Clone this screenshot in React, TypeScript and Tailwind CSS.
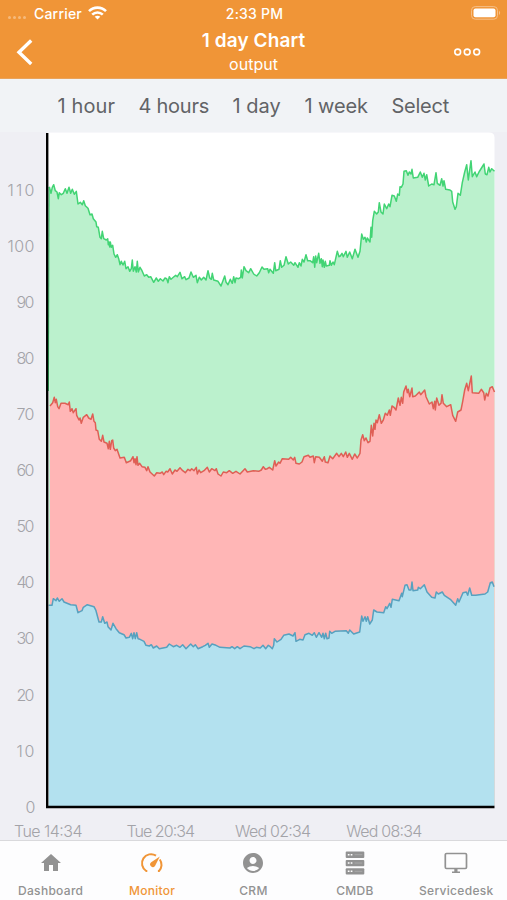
import React from 'react';
import { MdAccountCircle, MdHome } from 'react-icons/md';

const ranges = [
  { label: '1 hour', width: 'w-[57px] tracking-[0.1px]' },
  { label: '4 hours', width: 'w-[70px] tracking-[-0.25px]' },
  { label: '1 day', width: 'w-[48px] tracking-[0px]' },
  { label: '1 week', width: 'w-[63px] tracking-[-0.1px]' },
  { label: 'Select', width: 'w-[58px] tracking-[-0.25px]' },
];

const yTicks = [0, 10, 20, 30, 40, 50, 60, 70, 80, 90, 100, 110];
const xTicks = [
  { label: 'Tue 14:34', x: 14, width: 68.5 },
  { label: 'Tue 20:34', x: 126.5, width: 68.5 },
  { label: 'Wed 02:34', x: 235, width: 76 },
  { label: 'Wed 08:34', x: 346.3, width: 76 },
];

const green =
  '49.3,186.7 51,193.3 52.3,187.3 53.7,184.7 55.3,190.7 57,192 58.3,198.7 59.3,192.7 61.3,194.7 63.3,193.3 65.3,188.7 67,193.3 69,187.3 70.7,193.3 72.3,189.3 74.3,194.3 76.3,191.3 78,204 80.3,202.3 82.3,204.7 83.7,200.7 85.3,205.7 88,208.3 90,214.7 92,214 93.3,218.7 96,222 96.7,226.7 98.3,227.3 100,237.3 101.3,238.7 102.3,231.3 103.7,238.7 106.3,240 107.7,238.7 108.3,244.7 109,242 109.7,247 110.3,242 111.3,247.3 112.7,245.3 114,254 115.7,257.3 117.3,254.7 118.7,258.7 120,264.7 121.3,261.3 123,265 124.7,261.3 126,268.7 128,266.7 129.7,271.3 131.3,268.7 132.3,260 133.3,271.3 135,266.7 136.3,272 137.3,261.3 138.3,272 140,267.3 142,270.7 144.3,276 146.7,274.7 148.7,277.3 150.7,276.7 153.7,282.3 156.3,278 158.3,281.3 160.3,278.7 163,281 165,278 166.7,278.7 168,282.7 169.3,276.7 171,279.3 173.3,277.3 175.7,275.3 177.3,276.7 180,272.3 182,278.7 184.7,276.7 186,279.7 189,278 191,272 ' +
  '193.3,277.3 196,275.3 197.3,282.7 199.3,277.3 201.3,280 203.7,277.3 206,280 208,270.7 209.7,278 211.3,279.3 212.3,273.3 213.7,280 218,281.3 221,286 224.7,276 226,282 228,284.7 230.3,279.3 232.3,283.3 233.7,276.7 235,282.7 236,278 238.7,278.7 240.7,277.3 241.3,270 242.3,278 244,266.7 246,270.7 248.7,272.7 250.7,268.7 253.7,274 256.7,276 259.3,272.7 262,267 264,269.3 267.7,268.7 268.7,272.7 270,269.3 273.3,273.3 274.7,262.7 275.7,270.7 279,269.3 280.3,260.7 281.7,267.3 284,265.3 286,256.7 288.3,264 290.7,262 293.7,265.3 295,262.7 298,267.3 299.3,262.7 301,266 302.3,259.3 304,262 306,254.7 307.7,260.7 310,260.7 312.7,262.7 313.7,256.7 314.7,267.3 315.7,256 316.7,262.7 318.7,253.3 320,263.3 321.3,258.7 322.3,266.7 323,260 324.3,267.3 325.3,261.3 326.3,266 329.3,265.3 330,260.7 331.3,265.3 333,262 334.3,264.7 337.3,251.3 339,256.7 ' +
  '340.3,256 342,253.3 343.3,256.7 346,251.3 347.3,257.3 349.7,252 352.3,258.7 355,249.3 358,257.3 360,251.3 361.7,234 363.3,239.3 365,237.3 366.3,242 367.3,238 370,242 371,227.3 371.7,237.3 372.7,220.7 374.3,211.3 376.7,214 378.3,212 379.3,202.7 381,212 383,214 384.3,204 386.7,208.7 388.7,204 390,206.7 392,195.3 394.3,196 396.3,201.3 397.7,194 399.3,195.3 400,186.7 401.3,187.3 403,184 404,171.3 406.3,170.7 408,175.3 409.3,172 411,174 412,169.3 413.3,178 417.7,177.3 420.3,172 422.3,177.3 424,173.3 425.3,180 426.7,174.7 428.7,186 431.7,184 434,184.7 436,172.7 437.3,183.3 440,185.3 441.7,178.7 443,186 444,180.7 445.7,189.3 450,190 451.7,191.3 452.7,202 455,209.3 456.3,206.7 458,193.3 460.3,195.3 462.3,182.7 464.7,172 466.7,164.7 468.3,180 471,160.7 472.3,176.7 475,172 476.7,176.7 479,172 484,164 485.3,174 487,174.7 488.7,167.3 490,172 491.7,168.7 494.5,171.3';

const red =
  '50,406 52.7,402.7 54.3,397.3 55.3,402.7 56.3,399.3 57.7,406.7 59,408.7 61,403.3 65,403.3 68.3,404.7 69.3,402 70.3,411.3 72,408.7 73.3,412.7 76,408.7 76.7,415.3 79,420 80,418 81.3,423.3 83.3,417.3 86.7,414.7 88.7,418 91,419.3 92.7,414 94,421.3 95.3,422.7 96,430 97.7,430.7 99.3,439.3 101.3,441.3 102.7,435.3 104,442 107,443.3 108.3,448.7 109.3,441.3 110.3,449.3 111.7,440.7 112.7,440 113.7,448 115.3,450.7 117,449.3 120,458 124.3,457.3 126.3,462.7 130.7,460.7 133,456.7 134,462.7 135,458.7 136,464.7 137,456.7 138,465.3 139.7,463.3 142,466.7 145,467.3 146.7,470.7 148,466.7 150,472 154.3,476 156.7,472.7 160,473.3 162.3,472 163.7,474.7 166,471.3 167.7,472 170,468.7 172.3,474 175,470 177,471.3 180,467.7 182.7,470.7 185.3,472.7 188,469.3 190,470.7 191.7,468.7 194,470.7 196.3,467.3 197.3,474 199,470 200.7,472.7 204,470.7 207.3,467.3 209.3,472 211.7,468.7 215,470.7 216.3,468.7 218,474 221,476 223.3,472 226.7,472.7 229.3,470.7 232.7,473.3 236,471.3 240,474 245,468.7 247.3,472 253.3,470.7 258.7,471.3 261.3,470 263.3,466.7 265.3,469.3 ' +
  '267.3,468.7 269.3,467.3 272.7,470 274.7,460.7 276,466 278.7,462 280,463.3 282.3,458.7 288.7,459.3 290.7,457.3 293.3,460 294.7,457.3 296,463.3 299.3,464 302,462 304,456.7 308.3,455.3 310,457.3 313.3,456 314.3,462.7 315.7,456.7 319.3,457.3 322.3,461.3 324.3,456.7 325.3,462 328,462.7 330,456 332.7,458.7 336.7,453.3 339,456.7 341.3,453.3 343.3,456.7 345.7,452 347.3,457.3 349.3,453.3 352.3,459.3 354.7,454 357.3,458 360,453.3 361,440 362.7,434.7 364.3,440.7 366,438 368,442.7 370,441.3 371.3,425.3 372.7,436 374,423.3 375,429.3 376,420 377.3,422.7 379.3,414.7 381.3,423.3 383.3,420 385.3,413.3 387.3,415.3 389.3,410 390.3,415.3 392,406 394,407.3 396,410 398.3,398 400,405.3 401.3,397.3 402.7,403.3 403.7,392 406,386 407.3,392.7 408.3,389.3 409.7,396.7 412,388 412.7,396.7 415.3,396 419.3,392 420.7,394.7 424.7,390 426,396.7 429.3,404 432,402 433.3,408.7 434.7,401.3 435.3,410 436.7,398 439,405.3 441,403.3 442,394.7 443.3,403.3 446.7,406.7 450.7,404.7 452.7,415.3 455.7,421.3 457.7,412 461,410 462.7,401.3 464.7,390 466.7,383.3 468.3,390.7 471.3,376 472.3,392.7 478.7,393.3 481.3,389.3 483.7,392.7 484.7,400 486.3,393.3 488,396 490,388 492.3,386.7 494.5,392';

const blue =
  '48.7,605.3 52,605.3 53.3,598.7 56,600.7 57.3,598 59.3,601.3 62,598.7 64,602 70.7,604.7 76,605.3 78,612.7 82,610.7 83.3,607.3 87.3,604.7 94,606.7 96,610.7 99,622 101.3,622 102.7,616.7 104.7,623.3 107,622 108,626.7 111,630 113,623.3 116,628.7 119.3,632.7 124,634.7 126,638 129.3,637.3 131.3,633.3 132.7,638.7 134,632.7 135.3,638.7 136.7,632.7 138,638.7 140,639.3 144,641.3 146,645.3 149.3,646 151.3,644.7 153.3,648 156.7,646 159.3,648.7 166.7,647.3 169.3,644 173.3,646.7 176.7,645.3 180,647.3 182.7,644.7 186,648.7 190.7,644 193.3,646.7 195.3,644.7 198,648.7 202.7,646.7 205.3,645.3 208,643.3 209.3,647.3 212,644 216,645.3 220,647.3 230,648 232,646.7 234.7,648.7 237.3,646.7 240,648.7 244,646 250,646.7 254,648.7 ' +
  '256.3,647.3 260.3,648 263,645.3 265.7,648.7 268.3,645.3 270.3,646.7 272.3,648.7 273.7,645.3 274.3,638.7 277,642 281,639.3 283.7,635.3 289,634 293,636 295,632.7 296,641.3 299.7,639.3 303,640 305,634.7 309,633.3 312.3,635.3 314.3,632.7 316.3,637.3 319,632.7 321.7,637.3 323,633.3 324.3,638.7 325.7,633.3 327,638.7 329,638 329.7,631.3 331.7,633.3 335,631.3 346.3,630.7 348.3,633.3 349.7,630 351.7,632 353.7,634 359.7,632 361.7,616 363,621.3 365,616.7 366.3,621.3 367.7,616.7 369.7,624 372.3,620 373.7,610 377,612 383.7,612.7 385.7,606.7 387,608.7 389.7,603.3 391,607.3 392.3,599.3 399,600.7 401.7,593.3 402.3,596.7 405,585.3 407,584.7 409,590 411,590 412,582 413,590.7 417.7,590 418.3,587.3 420.3,588.7 424.3,584.7 427,592 431.7,597.3 435,598 436.3,592 438.3,594 442.3,592 444.3,595.3 450.3,599.3 455.7,605.3 457.7,598.7 459,602 463,592.7 466.3,592 467.7,595.3 469.7,588 471.7,595.3 475.7,595.3 485,594 487.7,592 490.3,582.7 492.3,582 494,586.7';

const series = [
  { name: 'green', points: green, start: 49, stroke: '#42d474', fill: '#bbf1cd' },
  { name: 'red', points: red, start: 50, stroke: '#df5f55', fill: '#ffb6b6' },
  { name: 'blue', points: blue, start: 48.7, stroke: '#57a1bf', fill: '#b3e1ef' },
];

const StatusBar: React.FC = () => (
  <div className="flex h-[26px] items-center text-[14px] font-medium">
    <div className="flex flex-1 items-center pl-2">
      <div className="flex w-[26px] gap-[2px]">
        {[0, 1, 2, 3].map(dot => (
          <span key={dot} className="mt-2 h-[3px] w-[3px] rounded-full bg-white/35" />
        ))}
      </div>
      <span className="w-[54px] whitespace-nowrap tracking-[0.2px]">Carrier</span>
      <svg width="19" height="14" viewBox="0 0 19 14" fill="none" stroke="currentColor" strokeWidth="2.6">
        <path d="M1 5.2C5.8.4 13.2.4 18 5.2" />
        <path d="M4.2 8.6c3-2.9 7.6-2.9 10.6 0" />
        <path d="M9.5 13.6 6.7 10.8c1.6-1.5 4-1.5 5.6 0z" fill="currentColor" stroke="none" />
      </svg>
    </div>
    <span className="w-[60px] text-center tracking-[0.2px] whitespace-nowrap">2:33 PM</span>
    <div className="flex flex-1 items-center justify-end pr-[6px]">
      <svg width="31" height="14" viewBox="0 0 31 14">
        <rect x="1.5" y=".6" width="26" height="12.6" rx="3.7" fill="none" stroke="#f6bf87" />
        <rect x="3.5" y="2.5" width="22" height="8.8" rx="2" fill="#fff" />
        <path d="M29 4.8c1.5.8 1.5 3.4 0 4.2z" fill="#f6bf87" />
      </svg>
    </div>
  </div>
);

const Chart: React.FC = () => (
  <svg className="block shrink-0" width="507" height="708" viewBox="0 132 507 708">
    <path d="M47 132.5h442q5.5 0 5.5 5V808H47z" fill="#fff" />
    {series.map(s => (
      <g key={s.name}>
        <polygon points={`${s.start},806 ${s.points} 494.5,806`} fill={s.fill} />
        <polyline points={s.points} fill="none" stroke={s.stroke} strokeWidth="1.5" strokeLinejoin="round" />
      </g>
    ))}
    <path d="M49.2 187 48.4 391" stroke="#42d474" strokeWidth="1.2" />
    <path d="M47.2 133V807H494.5" fill="none" stroke="#000" strokeWidth="2.4" />

    {/* Axis labels */}
    <g fill="#a3a3a8" fontSize="16" fontWeight="300">
      {yTicks.map(tick => {
        const width = String(tick).length * 9;
        return (
          <text key={tick} x={34.5 - width} y={812.8 - tick * 5.611} textLength={width}>
            {tick}
          </text>
        );
      })}
      {xTicks.map(tick => (
        <text key={tick.label} x={tick.x} y="836.7" textLength={tick.width}>
          {tick.label}
        </text>
      ))}
    </g>
  </svg>
);

const GaugeIcon = () => (
  <svg width="24" height="24" viewBox="0 0 24 24" fill="none" stroke="currentColor" strokeWidth="2">
    <path d="M7.3 20H6.2A8.9 8.9 0 0 1 16 4.6M19.8 8.5A8.9 8.9 0 0 1 19 20h-1.1" />
    <path d="M19.8 5.4 15 15a2.7 2.7 0 1 1-3.8-3.8z" fill="currentColor" stroke="none" />
  </svg>
);

const ServerIcon = () => (
  <svg width="20" height="24" viewBox="0 0 20 24" fill="currentColor">
    {[0.6, 8.9, 17.2].map(y => (
      <g key={y}>
        <rect x=".7" y={y} width="18.6" height="6.4" rx="1" />
        <path d={`M2.8 ${y + 3.1}h1.7M5.7 ${y + 3.1}h1.7`} stroke="#fff" strokeWidth="1.5" />
        <path d={`M9.5 ${y + 3.1}h7.8`} stroke="#a9a9a9" strokeWidth="1" />
      </g>
    ))}
  </svg>
);

const DesktopIcon = () => (
  <svg width="24" height="24" viewBox="0 0 24 24" fill="none" stroke="currentColor" strokeWidth="1.7">
    <rect x="1.3" y="2.5" width="21.2" height="15" rx="1.2" />
    <path d="M10.3 17.5h3.2v3h2.5V22H8v-1.5h2.3z" fill="currentColor" stroke="none" />
  </svg>
);

const tabs = [
  { label: 'Dashboard', icon: <MdHome size={24} /> },
  { label: 'Monitor', icon: <GaugeIcon />, active: true },
  { label: 'CRM', icon: <MdAccountCircle size={24} /> },
  { label: 'CMDB', icon: <ServerIcon /> },
  { label: 'Servicedesk', icon: <DesktopIcon /> },
];

const App: React.FC = () => {
  return (
    <div className="flex h-[900px] w-[507px] flex-col overflow-hidden bg-[#efeff4] font-['Inter',sans-serif]">
      <header className="h-[79px] shrink-0 border-b border-[#e9a35c] bg-[#f09537] text-white">
        <StatusBar />
        <div className="flex h-[53px] items-start">
          <button className="w-20 pt-3 pl-4">
            <svg width="18" height="28" viewBox="0 0 18 28" fill="none" stroke="currentColor" strokeWidth="3.4">
              <path d="M15.2 2.5 3 14.2l12.2 11.7" />
            </svg>
          </button>
          <div className="flex-1 pt-px text-center">
            <h1 className="text-[19px] leading-[28px] font-semibold tracking-[0.1px]">1 day Chart</h1>
            <p className="text-[16px] leading-[18px]">output</p>
          </div>
          <button className="flex w-20 justify-end pt-[21px] pr-[25px]">
            <svg width="30" height="10" viewBox="0 0 30 10" fill="none" stroke="currentColor" strokeWidth="1.6">
              <circle cx="5.7" cy="5" r="2.9" />
              <circle cx="15.2" cy="5" r="2.9" />
              <circle cx="24.7" cy="5" r="2.9" />
            </svg>
          </button>
        </div>
      </header>

      {/* Time range */}
      <nav className="flex h-[53px] shrink-0 items-center justify-center gap-6 bg-[#f1f3f6] text-[20px] text-[#626366]">
        {ranges.map(range => (
          <button key={range.label} className={`${range.width} text-left whitespace-nowrap`}>{range.label}</button>
        ))}
      </nav>

      <Chart />

      {/* Tab bar */}
      <nav className="grid h-[60px] shrink-0 grid-cols-5 border-t border-[#d9d9dc] bg-[#fdfdfe]">
        {tabs.map(tab => (
          <button
            key={tab.label}
            className={`flex flex-col items-center pt-[10px] text-[12px] leading-[32px] font-medium tracking-[0.3px] ${
              tab.active ? 'text-[#f09537]' : 'text-[#929292]'
            }`}
          >
            {tab.icon}
            <span className="h-6">{tab.label}</span>
          </button>
        ))}
      </nav>
    </div>
  );
};

export default App;
